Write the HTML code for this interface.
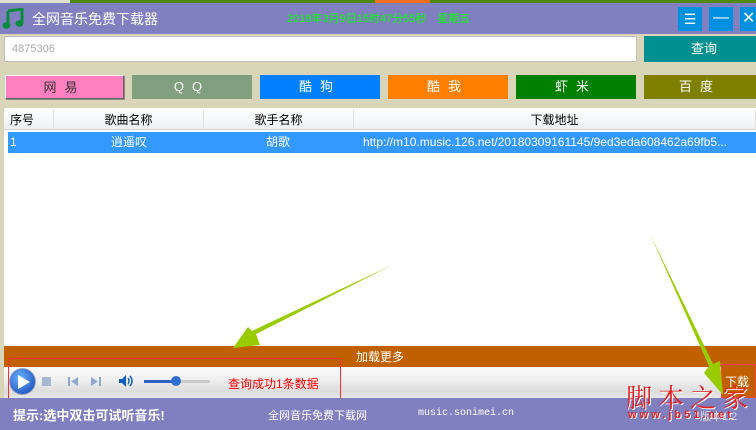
<!DOCTYPE html>
<html><head><meta charset="utf-8"><style>
*{margin:0;padding:0;box-sizing:border-box}
body{width:756px;height:430px;overflow:hidden;background:#d8d5b8;position:relative;font-family:"Liberation Sans","Noto Sans CJK SC",sans-serif;font-size:12px}
.a{position:absolute}
.btn{position:absolute;top:75px;height:24px;color:#fff;text-align:center;line-height:24px;font-size:13px;letter-spacing:8px}
.hd{position:absolute;top:110px;height:20px;line-height:20px;text-align:center;font-size:12px;color:#000;border-right:1px solid #e0e0e0}
</style></head><body>
<div class="a" style="left:0;top:0;width:756px;height:3px;background:#4e8a10"></div>
<div class="a" style="left:0;top:0;width:70px;height:3px;background:#e0e0d0"></div>
<div class="a" style="left:375px;top:0;width:55px;height:3px;background:#f07020"></div>
<div class="a" style="left:0;top:3px;width:756px;height:31px;background:#8080c0"></div>
<svg class="a" style="left:2px;top:8px" width="22" height="22" viewBox="0 0 22 22"><path d="M6 3 L20 1 L20 15 M6 3 L6 17" stroke="#0a8a40" stroke-width="3" fill="none"/><ellipse cx="4.5" cy="17.5" rx="4" ry="3.2" fill="#0a8a40"/><ellipse cx="17.5" cy="15.5" rx="4" ry="3.2" fill="#0a8a40"/></svg>
<div class="a" style="left:32px;top:9px;color:#fff;font-size:14px">全网音乐免费下载器</div>
<div class="a" style="left:287px;top:10px;color:#00ff00;font-size:11px">2018年3月9日15时47分55秒　星期五</div>
<div class="a" style="left:678px;top:7px;width:24px;height:24px;background:#0090e0;color:#fff;text-align:center;line-height:24px;font-size:14px">☰</div>
<div class="a" style="left:709px;top:7px;width:24px;height:24px;background:#0090e0;color:#fff;text-align:center;line-height:22px;font-size:16px">—</div>
<div class="a" style="left:740px;top:7px;width:16px;height:24px;background:#0090e0;color:#fff;line-height:24px;font-size:16px;padding-left:2px">✕</div>
<div class="a" style="left:4px;top:36px;width:633px;height:26px;background:#fff;border:1px solid #c0c0c0;color:#aaa;font-size:11px;line-height:24px;padding-left:7px">4875306</div>
<div class="a" style="left:644px;top:36px;width:112px;height:26px;background:#009090;color:#fff;font-size:13px;line-height:26px;padding-left:47px">查询</div>
<div class="btn" style="left:5px;width:119px;background:#ff80c0;color:#333;border:1px solid #fff;border-right-color:#666;border-bottom-color:#666;box-shadow:1px 1px 0 #888">网易</div>
<div class="btn" style="left:132px;width:120px;background:#80a080">QQ</div>
<div class="btn" style="left:260px;width:120px;background:#0080ff">酷狗</div>
<div class="btn" style="left:388px;width:120px;background:#ff8000">酷我</div>
<div class="btn" style="left:516px;width:120px;background:#008000">虾米</div>
<div class="btn" style="left:644px;width:112px;background:#808000">百度</div>
<div class="a" style="left:4px;top:108px;width:752px;height:238px;background:#fff"></div>
<div class="a" style="left:4px;top:108px;width:752px;height:22px;background:linear-gradient(#fff,#eef0f2);border-bottom:1px solid #d0d0d0"></div>
<div class="hd" style="left:4px;width:50px;text-align:left;padding-left:6px">序号</div>
<div class="hd" style="left:54px;width:150px">歌曲名称</div>
<div class="hd" style="left:204px;width:150px">歌手名称</div>
<div class="hd" style="left:354px;width:402px">下载地址</div>
<div class="a" style="left:8px;top:132px;width:748px;height:21px;background:#3399ff;color:#fff;line-height:21px;font-size:12px">
<span class="a" style="left:2px">1</span><span class="a" style="left:103px">逍遥叹</span><span class="a" style="left:258px">胡歌</span><span class="a" style="left:355px;white-space:nowrap">http://m10.music.126.net/20180309161145/9ed3eda608462a69fb5...</span></div>
<div class="a" style="left:4px;top:346px;width:752px;height:21px;background:#c06000;color:#fff;line-height:22px;text-align:center;font-size:12px">加载更多</div>
<div class="a" style="left:4px;top:367px;width:752px;height:31px;background:linear-gradient(#fafafa,#f0f0f0 40%,#dcdcdc 80%,#e8e8e8)"></div>
<div class="a" style="left:8px;top:358px;width:333px;height:42px;border:1px solid #ff3030"></div>
<div class="a" style="left:9px;top:368px;width:27px;height:27px;border-radius:50%;background:radial-gradient(circle at 40% 35%,#6ab0ff,#1040b0);border:1px solid #9ab"></div>
<svg class="a" style="left:17px;top:374px" width="14" height="16"><path d="M1 1 L13 8 L1 15Z" fill="#fff"/></svg>
<div class="a" style="left:42px;top:377px;width:9px;height:9px;background:#a8b8d0"></div>
<svg class="a" style="left:67px;top:376px" width="34" height="11"><path d="M1 1v9h2V1z M11 1L4 5.5 11 10z M24 1L31 5.5 24 10z M32 1v9h2V1z" fill="#90a8d0"/></svg>
<svg class="a" style="left:118px;top:374px" width="16" height="14"><path d="M1 5h3l4-4v12l-4-4H1z" fill="#1060c0"/><path d="M10 4q2 3 0 6 M12 2q4 5 0 10" stroke="#1060c0" stroke-width="1.5" fill="none"/></svg>
<div class="a" style="left:144px;top:380px;width:66px;height:3px;background:#ccc;border-radius:2px"></div>
<div class="a" style="left:144px;top:380px;width:32px;height:3px;background:#3060c0"></div>
<div class="a" style="left:171px;top:376px;width:10px;height:10px;border-radius:50%;background:#3070d0"></div>
<div class="a" style="left:228px;top:375px;color:#ff0000;font-size:12px">查询成功1条数据</div>
<div class="a" style="left:721px;top:364px;width:35px;height:34px;background:#c06000;border:1px solid #ff4040;color:#fff;line-height:34px;padding-left:3px">下载</div>
<div class="a" style="left:0;top:398px;width:756px;height:32px;background:#8080c0"></div>
<div class="a" style="left:13px;top:405px;color:#fff;font-size:13px;font-weight:bold">提示:选中双击可试听音乐!</div>
<div class="a" style="left:268px;top:407px;color:#fff;font-size:11px">全网音乐免费下载网</div>
<div class="a" style="left:418px;top:408px;color:#fff;font-size:10px;font-family:'Liberation Mono',monospace">music.sonimei.cn</div>
<div class="a" style="left:700px;top:408px;color:#ddd;font-size:11px">版本1.2</div>
<div class="a" style="left:626px;top:378px;color:#e02020;font-size:26px;font-family:'Noto Serif CJK SC',serif;letter-spacing:6px;text-shadow:1px 1px 0 #fff">脚本之家</div>
<div class="a" style="left:628px;top:409px;color:#e02020;font-size:11px;font-weight:bold;letter-spacing:3px;text-shadow:1px 1px 0 #fff">www.jb51.net</div>
<svg class="a" style="left:0;top:0" width="756" height="430"><path d="M392 265 L256 334 L260 345 L233 348 L248 327 L252 331Z" fill="#99cc00"/><path d="M650 234 L713 364 L720 361 L723 395 L704 373 L709 366Z" fill="#99cc00"/></svg>
</body></html>
